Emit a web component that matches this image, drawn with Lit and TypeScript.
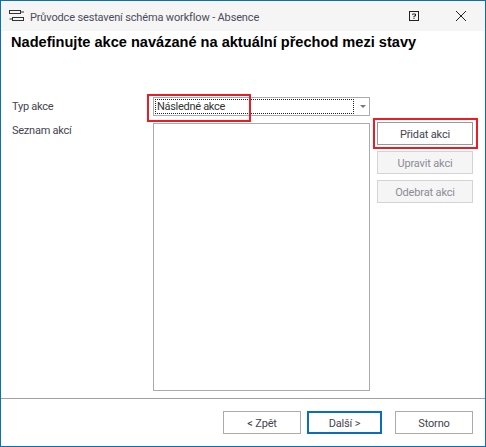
import { LitElement, html, css } from "lit";
import { customElement } from "lit/decorators.js";

@customElement("app-root")
export class AppRoot extends LitElement {
  static styles = css`
    :host { display: block; width: 486px; height: 447px; }
    * { box-sizing: border-box; }
    .win {
      position: relative; width: 486px; height: 447px; background: #fff;
      border: 1px solid #0a6ebd; display: flex; flex-direction: column;
      font: 11px Roboto, "Noto Sans", sans-serif; letter-spacing: -0.15px; color: #44444f;
    }
    .tb { height: 30px; flex: none; background: #f5f5f5; display: flex; align-items: center; padding-left: 8px; color: #4c4c5c; }
    .tb .ico { width: 16px; height: 16px; margin-right: 5px; flex: none; }
    .tb .t { flex: 1; white-space: nowrap; padding-top: 2px; }
    .tb .help { width: 10px; height: 10px; margin-right: 36px; flex: none; }
    .tb .close { width: 12px; height: 12px; margin-right: 18px; flex: none; }
    h1 { margin: 0; padding: 3px 0 0 10px; height: 66px; flex: none; font: bold 14.58px/17px "Liberation Sans", sans-serif; letter-spacing: 0; color: #000; white-space: nowrap; }
    .form { flex: 1; display: grid; grid-template-columns: 141px 217px 96px; column-gap: 0; padding-left: 11px; align-content: start; }
    .form .lab { height: 19px; line-height: 20px; color: #44444f; letter-spacing: -0.25px; }
    .combo { grid-column: 2 / 4; width: 217px; height: 19px; border: 1px solid #ababab; display: flex; align-items: center; padding: 1px; }
    .combo .val { width: 199px; height: 15px; border: 1px dotted #222; line-height: 14px; padding-left: 1px; color: #333; flex: none; letter-spacing: -0.3px; }
    .combo svg { margin-left: 6px; flex: none; }
    .lab2 { margin-top: 5px; }
    .list { margin-top: 7px; height: 268px; border: 1px solid #ababab; background: #fff; }
    .side { margin-top: 6px; margin-left: 7px; width: 96px; display: flex; flex-direction: column; gap: 6px; }
    button { font: inherit; letter-spacing: inherit; height: 23px; padding: 1px 0 0; background: #fff; border: 1px solid #ababab; color: #44444f; }
    button.on { border: 1px solid #999; }
    button.dis { background: #f5f5f5; border-color: #d4d4d4; color: #8c8c96; }
    .sep { flex: none; border-top: 1px solid #a0a0a0; margin-top: 6px; height: 48px; display: flex; justify-content: flex-end; align-items: flex-start; padding: 12px 12px 0 0; }
    .sep button { width: 78px; }
    .sep .next { width: 75px; margin: 0 13px 0 6px; border: 2px solid #0a6ebd; }
    .mark { position: absolute; border: 2px solid #ed1c24; pointer-events: none; }
    .m1 { left: 146px; top: 93px; width: 104px; height: 28px; }
    .m2 { left: 372px; top: 117px; width: 105px; height: 31px; }
  `;

  render() {
    return html`
      <div class="win">
        <div class="tb">
          <svg class="ico" viewBox="0 0 16 16" fill="none" stroke="#333" stroke-width="1">
            <rect x="0.5" y="2.5" width="11" height="3"></rect>
            <rect x="3.5" y="9.5" width="11" height="3"></rect>
            <path d="M11.5 4H15M0.5 11H3.5"></path>
          </svg>
          <span class="t">Průvodce sestavení schéma workflow - Absence</span>
          <svg class="help" viewBox="0 0 10 10" fill="none" stroke="#222" stroke-width="1">
            <rect x="0.5" y="0.5" width="9" height="9"></rect>
            <path d="M3.5 3.7V3H6.5V5H5V6.3M5 7V8"></path>
          </svg>
          <svg class="close" viewBox="0 0 12 12" fill="none" stroke="#222" stroke-width="1">
            <path d="M1 1L11 11M11 1L1 11"></path>
          </svg>
        </div>
        <h1>Nadefinujte akce navázané na aktuální přechod mezi stavy</h1>
        <div class="form">
          <div class="lab">Typ akce</div>
          <div class="combo">
            <div class="val">Následné akce</div>
            <svg width="6" height="3" viewBox="0 0 6 3"><path d="M0 0H6L3 3Z" fill="#777"></path></svg>
          </div>
          <div class="lab lab2">Seznam akcí</div>
          <div class="list"></div>
          <div class="side">
            <button class="on">Přidat akci</button>
            <button class="dis">Upravit akci</button>
            <button class="dis">Odebrat akci</button>
          </div>
        </div>
        <div class="sep">
          <button>&lt; Zpět</button>
          <button class="next">Další &gt;</button>
          <button>Storno</button>
        </div>
        <div class="mark m1"></div>
        <div class="mark m2"></div>
      </div>
    `;
  }
}
